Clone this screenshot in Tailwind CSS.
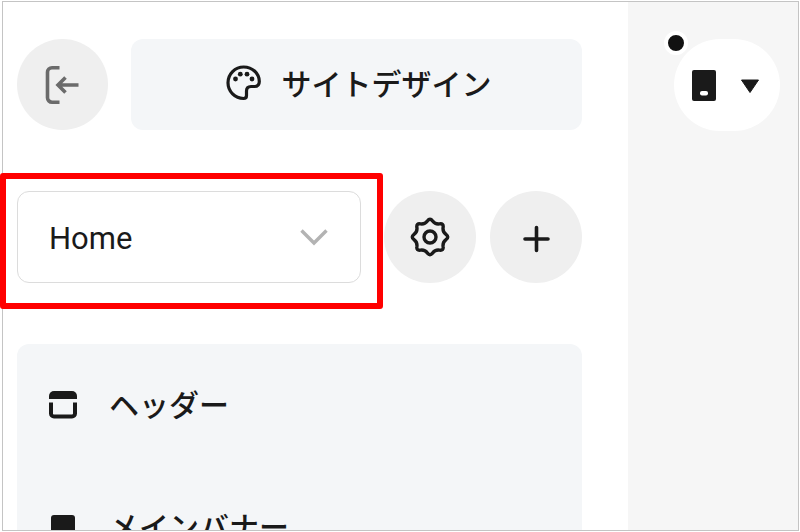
<!DOCTYPE html>
<html lang="ja">
<head>
    <meta charset="UTF-8">
    <meta name="viewport" content="width=device-width, initial-scale=1.0">
    <title>サイトデザイン</title>
    <!-- Tailwind CSS CDN -->
    <script src="https://cdn.jsdelivr.net/npm/@tailwindcss/browser@4"></script>
</head>
<body class="h-screen overflow-hidden bg-white pl-0.5 pt-px pr-px pb-px font-['Roboto','Noto_Sans_CJK_JP',sans-serif] text-[#1a1a1a]">
    <div class="flex h-full border border-[#c4c4c4]">

        <!-- Sidebar -->
        <aside class="flex min-w-0 flex-1 flex-col gap-[61px] bg-white pt-[37px] pr-[46px] pl-3.5">
            <div class="flex shrink-0 gap-[23px]">
                <button type="button" aria-label="戻る" class="flex size-[91px] shrink-0 items-center justify-center rounded-full bg-[#efefef] text-[#6b6b6b]">
                    <svg class="h-10 w-9" viewBox="0 0 36 40" fill="none" stroke="currentColor" stroke-width="3.6">
                        <path d="M14.5 2.8H7A4.5 4.5 0 0 0 2.5 7.3V32.7A4.5 4.5 0 0 0 7 37.2H14.5" />
                        <path d="M33.5 20H13M20.5 12.5L13 20L20.5 27.5" />
                    </svg>
                </button>
                <button type="button" class="flex flex-1 items-center justify-center gap-5 rounded-xl bg-[#f4f6f8] pb-1 pl-1 font-['Noto_Sans_CJK_JP',sans-serif] text-[30px] font-medium">
                    <svg class="size-9" viewBox="0 0 36 36" fill="none" stroke="currentColor" stroke-width="3.2">
                        <path d="M17.5 33.5C9 33.5 2 26.5 2 17.8C2 9 9 2 17.7 2C26.5 2 33.3 8.5 33.3 16.5C33.3 20 31.5 21.5 28.5 21.5H25C22 21.5 20.5 23 20.5 26V30.5C20.5 32.5 19.5 33.5 17.5 33.5Z" />
                        <g fill="currentColor" stroke="none">
                            <circle cx="9.5" cy="14" r="2.4" />
                            <circle cx="14.3" cy="9.2" r="2.4" />
                            <circle cx="21" cy="9.2" r="2.4" />
                            <circle cx="26" cy="14" r="2.4" />
                        </g>
                    </svg>
                    <span>サイトデザイン</span>
                </button>
            </div>

            <!-- Page selector -->
            <div class="flex shrink-0">
                <div class="relative mr-[23px] h-[92px] flex-1">
                    <select aria-label="ページ" class="size-full appearance-none rounded-xl border border-[#dcdcdc] bg-white pt-1 pr-16 pl-[31px] text-[31px]">
                        <option>Home</option>
                    </select>
                    <svg class="pointer-events-none absolute top-9 right-8 h-5 w-[30px]" viewBox="0 0 30 20" fill="none" stroke="#b3b3b3" stroke-width="3.4">
                        <path d="M2.5 3.5L15 16L27.5 3.5" />
                    </svg>
                    <div class="pointer-events-none absolute -top-[18px] -right-[22px] -bottom-[26px] -left-[17px] z-10 rounded-[3px] border-6 border-[#ff0000]"></div>
                </div>
                <button type="button" aria-label="設定" class="mr-3.5 flex size-[92px] items-center justify-center rounded-full bg-[#efefef]">
                    <svg class="size-10" viewBox="0 0 40 40" fill="none" stroke="currentColor" stroke-width="3.4">
                        <path d="M17.4 4Q20 .5 22.6 4Q25.2 7.5 29.5 6.9Q33.8 6.2 33.1 10.5Q32.5 14.8 36 17.4Q39.5 20 36 22.6Q32.5 25.2 33.1 29.5Q33.8 33.8 29.5 33.1Q25.2 32.5 22.6 36Q20 39.5 17.4 36Q14.8 32.5 10.5 33.1Q6.2 33.8 6.9 29.5Q7.5 25.2 4 22.6Q.5 20 4 17.4Q7.5 14.8 6.9 10.5Q6.2 6.2 10.5 6.9Q14.8 7.5 17.4 4Z" />
                        <circle cx="20" cy="20" r="6" />
                    </svg>
                </button>
                <button type="button" aria-label="追加" class="flex size-[92px] items-center justify-center rounded-full bg-[#efefef]">
                    <svg class="size-8" viewBox="0 0 32 32" fill="none" stroke="currentColor" stroke-width="3.6" stroke-linecap="round">
                        <path d="M16.5 6.5V29.5M5 18H28" />
                    </svg>
                </button>
            </div>

            <!-- Section list -->
            <ul class="min-h-0 flex-1 overflow-hidden rounded-t-xl bg-[#f4f6f8] text-[30px] font-medium">
                <li class="flex h-[122px] items-center gap-[31px] px-[31px]">
                    <svg class="size-[30px]" viewBox="0 0 30 30" fill="currentColor">
                        <path d="M1 9V6A5 5 0 0 1 6 1H24A5 5 0 0 1 29 6V9Z" />
                        <path d="M3 12.5V23.5A3 3 0 0 0 6 26.5H24A3 3 0 0 0 27 23.5V12.5" fill="none" stroke="currentColor" stroke-width="4" />
                    </svg>
                    <span>ヘッダー</span>
                </li>
                <li class="flex h-[122px] items-center gap-[31px] px-[31px]">
                    <svg class="size-[30px]" viewBox="0 0 30 30" fill="currentColor">
                        <rect x="3" y="3" width="24" height="24" rx="3" />
                    </svg>
                    <span>メインバナー</span>
                </li>
            </ul>
        </aside>

        <!-- Preview area -->
        <main class="flex w-[170px] items-start justify-end bg-[#f6f6f6] pt-[37px] pr-[18px]">
            <button type="button" aria-label="表示デバイス" class="relative flex h-[92px] items-center gap-6 rounded-[46px] bg-white pr-5 pl-[18px]">
                <svg class="h-8 w-6" viewBox="0 0 24 32">
                    <rect x="0" y="1" width="24" height="31" rx="2" fill="#1a1a1a" />
                    <rect x="8" y="22" width="8" height="4.5" rx="2" fill="#ffffff" />
                </svg>
                <svg class="h-4 w-5" viewBox="0 0 20 16" fill="#1a1a1a">
                    <path d="M1.5 3H18.5L10 15.5Z" stroke="#1a1a1a" stroke-linejoin="round" />
                </svg>
                <span class="absolute -top-2 -left-2.5 size-6 rounded-full border-4 border-white bg-[#111111]"></span>
            </button>
        </main>
    </div>
</body>
</html>
